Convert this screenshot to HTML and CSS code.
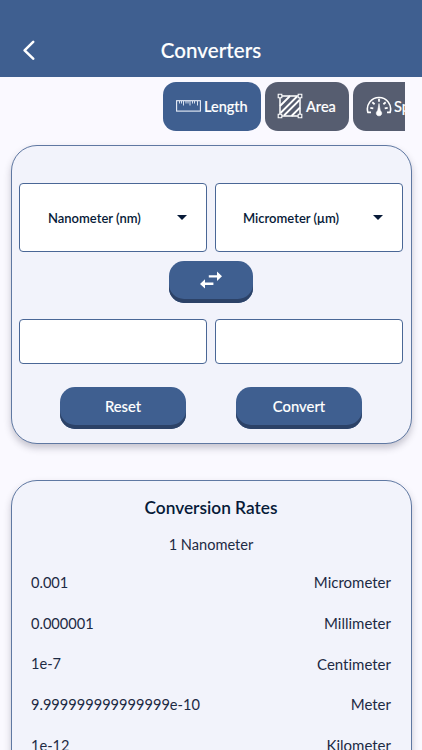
FILE: index.html
```
<!DOCTYPE html>
<html lang="en">
<head>
    <meta charset="UTF-8">
    <meta name="viewport" content="width=device-width, initial-scale=1.0">
    <title>Converters</title>
    <link rel="stylesheet" href="styles.css">
</head>
<body>
    <!-- Header -->
    <header class="header">
        <a href="#" class="back" aria-label="Back">
            <svg width="12" height="20" viewBox="0 0 12 20"><path d="M10.2 1.8 L1.6 10.3 L10.2 18.7" fill="none" stroke="#fff" stroke-width="2.5" stroke-linecap="round" stroke-linejoin="round"/></svg>
        </a>
        <h1>Converters</h1>
    </header>

    <!-- Category Tabs -->
    <nav class="tabs">
        <button type="button" class="tab tab-length active">
            <svg width="25" height="12" viewBox="0 0 25 12" fill="none" stroke="#e9eef8">
                <rect x="0.6" y="0.7" width="23.8" height="10.4" stroke-width="1.1"/>
                <path d="M3.5 1v2.5M5.5 1v2.5M7.5 1v4.5M10 1v2.5M12 1v2.5M14 1v4.5M16.5 1v2.5M18.5 1v2.5M21.5 1v4.5" stroke-width="0.9"/>
            </svg>
            <span>Length</span>
        </button>
        <button type="button" class="tab tab-area">
            <svg width="26" height="26" viewBox="0 0 26 26" fill="none" stroke="#fff">
                <path d="M3 5v16M23 5v16M5 3h16M5 23h16" stroke-width="1.5"/>
                <path d="M3 13L13 3M3.5 20L20 3.5M7 22.5L22.5 7M14.5 23L23 14.5" stroke-width="1.8"/>
                <path d="M1.2 1.2h3.6v3.6H1.2zM21.2 1.2h3.6v3.6h-3.6zM1.2 21.2h3.6v3.6H1.2zM21.2 21.2h3.6v3.6h-3.6z" fill="#565d70" stroke-width="1.1"/>
            </svg>
            <span>Area</span>
        </button>
        <button type="button" class="tab tab-speed">
            <svg width="26" height="22" viewBox="0 0 26 22" fill="none" stroke="#fff">
                <path d="M5 17.4H1.9A11.6 11.6 0 1 1 24.1 17.4H21" stroke-width="1.6" stroke-linejoin="round"/>
                <path d="M4.3 12.8l3 .5M6.3 7.3l2.3 2M13 3.8v3M19.7 7.3l-2.3 2M21.7 12.8l-3 .5" stroke-width="1.8"/>
                <path d="M13 8.5L11.7 15.8A2.7 2.7 0 1 0 14.3 15.8Z" fill="#fff" stroke-width="0.6"/>
            </svg>
            <span>Speed</span>
        </button>
    </nav>

    <!-- Converter Card -->
    <main>
        <form class="card converter">
            <div class="row">
                <button type="button" class="select">
                    <span>Nanometer (nm)</span>
                    <i class="caret"></i>
                </button>
                <button type="button" class="select">
                    <span>Micrometer (μm)</span>
                    <i class="caret"></i>
                </button>
            </div>
            <button type="button" class="btn swap" aria-label="Swap units">
                <svg width="22" height="18" viewBox="0 0 22 18" fill="#fff">
                    <path d="M8.8 4.2H17V.6L22 5.3L17 10V6.6H8.8z"/>
                    <path d="M13.4 14H5v3.5L0 12.9L5 8.2v3.4h8.4z"/>
                </svg>
            </button>
            <div class="row">
                <input type="text" aria-label="From value">
                <input type="text" aria-label="To value">
            </div>
            <div class="actions">
                <button type="reset" class="btn">Reset</button>
                <button type="button" class="btn">Convert</button>
            </div>
        </form>

        <!-- Conversion Rates -->
        <section class="card rates">
            <h2>Conversion Rates</h2>
            <p class="base">1 Nanometer</p>
            <ul>
                <li><span class="value">0.001</span><span>Micrometer</span></li>
                <li><span class="value">0.000001</span><span>Millimeter</span></li>
                <li><span class="value">1e-7</span><span>Centimeter</span></li>
                <li><span class="value">9.999999999999999e-10</span><span>Meter</span></li>
                <li><span class="value">1e-12</span><span>Kilometer</span></li>
            </ul>
        </section>
    </main>
</body>
</html>
```
FILE: styles.css
```
/* General Styles */
* {
    box-sizing: border-box;
}

body {
    margin: 0;
    height: 100vh;
    overflow: hidden;
    font-family: 'Lato', sans-serif;
    font-variant-ligatures: none;
    background-color: #faf9ff;
    color: #1d2a44;
}

button {
    font-family: inherit;
    border: none;
    cursor: pointer;
}

/* Header Styles */
.header {
    display: grid;
    grid-template-columns: 60px 1fr 60px;
    align-items: center;
    height: 77px;
    padding-top: 22px;
    background-color: #3f5f90;
    color: #fff;
}

.header h1 {
    margin: 0;
    font-size: 20.5px;
    font-weight: 500;
    line-height: 24px;
    letter-spacing: 0.1px;
    text-align: center;
    -webkit-text-stroke: 0.15px #fff;
}

.back {
    display: flex;
    padding-left: 23px;
}

/* Tabs */
.tabs {
    display: flex;
    gap: 4px;
    margin: 5px 17px 0 163px;
    overflow: hidden;
}

.tab {
    display: flex;
    flex-shrink: 0;
    align-items: center;
    height: 49px;
    padding: 0 12px 1px 13px;
    gap: 4px;
    border-radius: 13px;
    background-color: #565d70;
    color: #fff;
    font-size: 14.5px;
    font-weight: 500;
    -webkit-text-stroke: 0.15px #fff;
}

.tab.active {
    background-color: #3f5f90;
}

.tab-length {
    width: 98px;
    gap: 3px;
}

.tab-area {
    width: 84px;
    padding-left: 12px;
    gap: 3px;
}

.tab-speed {
    width: 100px;
    gap: 2px;
}

/* Cards */
.card {
    width: 401px;
    margin-left: 11px;
    border: 1px solid #5f78a2;
    border-radius: 26px;
    background-color: #f2f3fb;
    box-shadow: 0 4px 7px rgba(40, 35, 60, 0.25);
}

.converter {
    display: flex;
    flex-direction: column;
    height: 299px;
    margin-top: 14px;
    padding: 37px 8px 0 7px;
}

.row {
    display: grid;
    grid-template-columns: 1fr 1fr;
    gap: 8px;
}

.select,
.row input {
    border: 1px solid #4a6796;
    border-radius: 4px;
    background-color: #fff;
}

.select {
    display: flex;
    align-items: center;
    justify-content: space-between;
    height: 69px;
    padding: 0 19px 0 28px;
    color: #071a38;
    font-size: 13px;
    font-weight: 600;
}

.select:last-child {
    padding-left: 27px;
}

.caret {
    border: 5px solid transparent;
    border-top-color: #071a38;
    border-bottom: none;
}

.row input {
    width: 100%;
    height: 45px;
    padding: 0 10px;
    font-size: 15px;
}

/* Buttons */
.btn {
    width: 126px;
    height: 42px;
    padding: 0 0 4px;
    border-radius: 15px;
    background-color: #3f5f90;
    box-shadow: inset 0 -4px 0 #2c4267;
    color: #fff;
    font-size: 14.8px;
    font-weight: 500;
    -webkit-text-stroke: 0.1px #fff;
}

.swap {
    display: flex;
    align-items: center;
    justify-content: center;
    align-self: center;
    width: 84px;
    margin: 9px 0 16px;
}

.actions {
    display: flex;
    justify-content: center;
    gap: 50px;
    margin-top: 23px;
}

/* Conversion Rates */
.rates {
    height: 340px;
    margin-top: 36px;
    padding: 16px 20px 0 19px;
    font-size: 15px;
}

.rates h2 {
    margin: 0;
    color: #071a38;
    font-size: 17.3px;
    font-weight: 600;
    line-height: 22px;
    text-align: center;
}

.base {
    margin: 15px 0 0;
    font-size: 14.6px;
    line-height: 22px;
    text-align: center;
}

.rates ul {
    margin: 6px 0 0;
    padding: 0;
    list-style: none;
}

.rates li {
    display: flex;
    align-items: center;
    justify-content: space-between;
    height: 40.7px;
}

.rates .value {
    font-size: 14.6px;
}
```
